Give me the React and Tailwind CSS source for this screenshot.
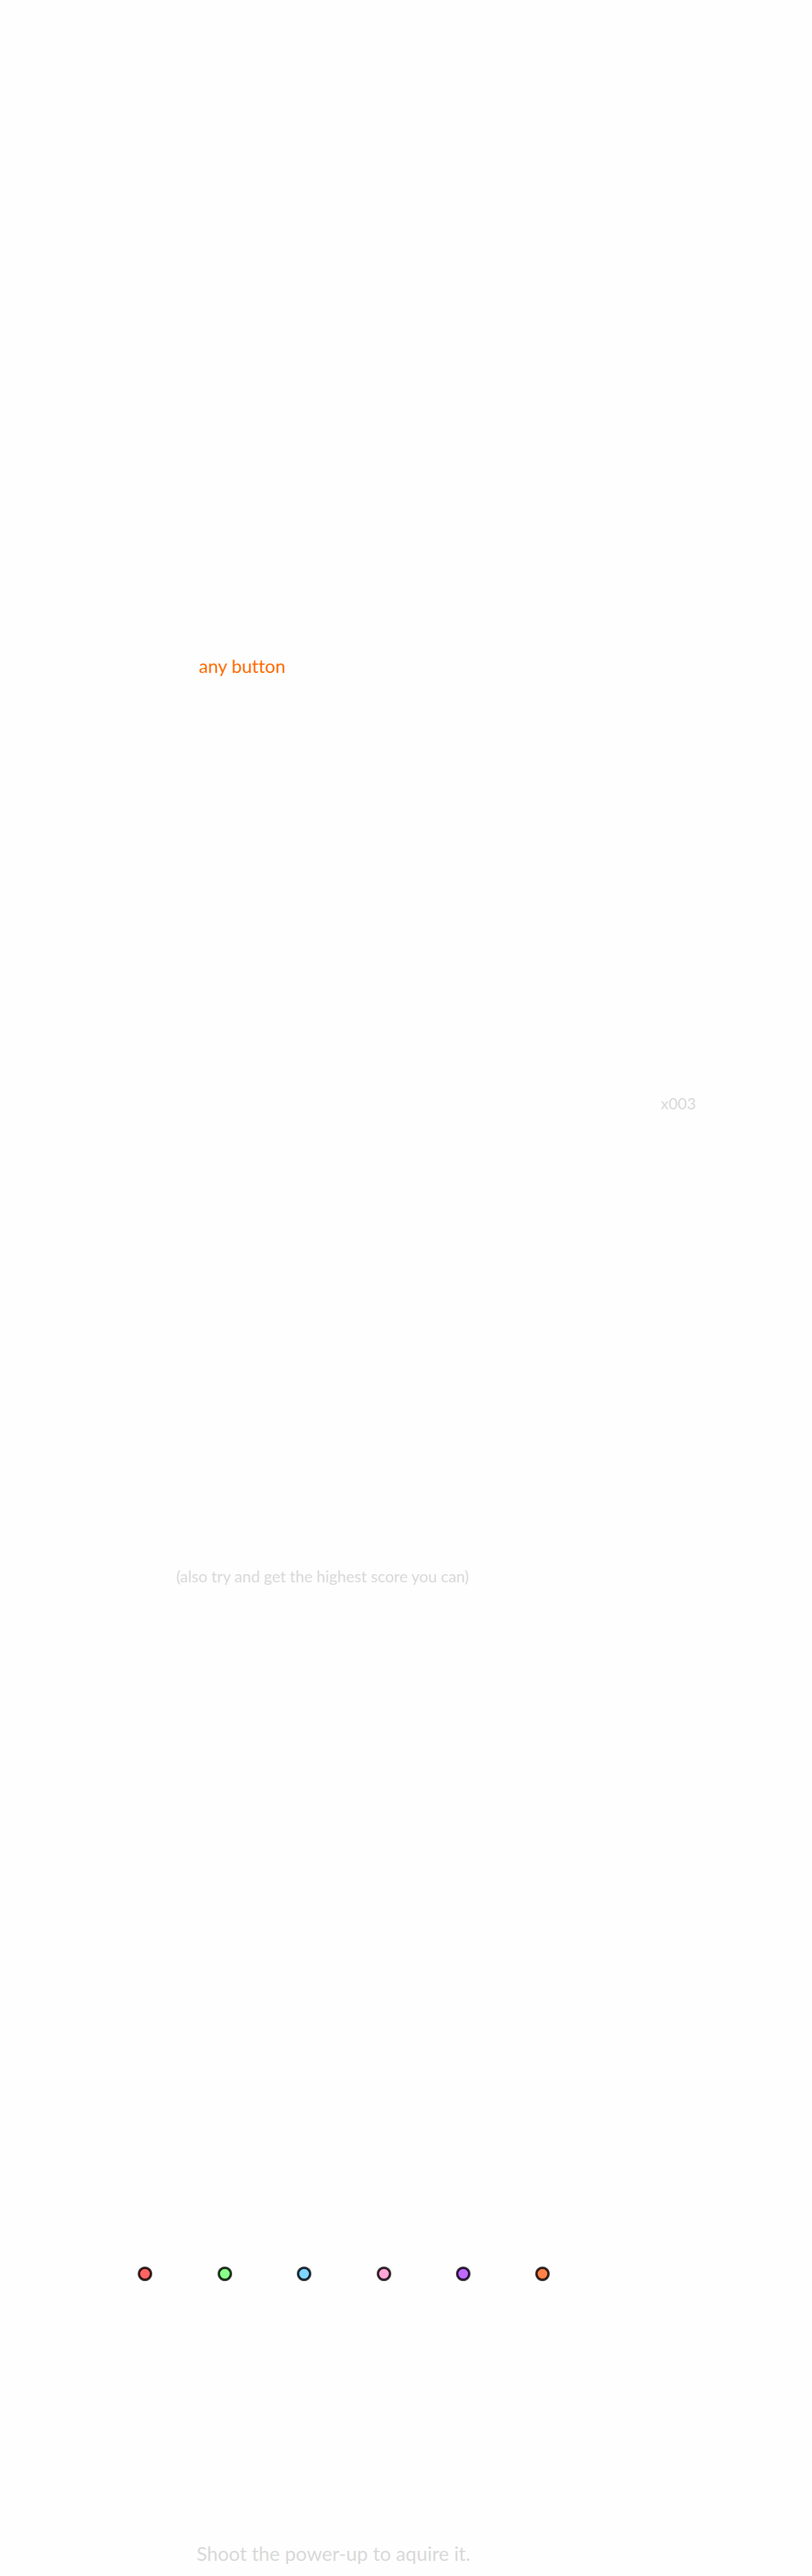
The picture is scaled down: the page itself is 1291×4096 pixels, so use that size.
const powerUps = [
  { name: "Red power-up", fill: "#ff6464", ring: "#2b0000" },
  { name: "Green power-up", fill: "#8aff8a", ring: "#002b00" },
  { name: "Blue power-up", fill: "#80d4ff", ring: "#001a2b" },
  { name: "Pink power-up", fill: "#ffa5d8", ring: "#2b0a1c" },
  { name: "Purple power-up", fill: "#c069ff", ring: "#1c0038" },
  { name: "Orange power-up", fill: "#ff8248", ring: "#2b0c00" },
];

function PowerUp({ name, fill, ring }) {
  return (
    <svg viewBox="0 0 36 36" className="size-[23px]" role="img" aria-label={name}>
      <circle cx="18" cy="18" r="18" fill="#333333" />
      <circle cx="18" cy="18" r="15" fill={ring} />
      <circle cx="18" cy="18" r="12.2" fill={fill} />
    </svg>
  );
}

export default function App() {
  return (
    <main className="flex min-h-screen flex-col bg-[#fefefe] pt-[1043px] pb-5 font-['Lato',sans-serif] leading-8 text-[#d8d8d8] [font-variant-ligatures:none]">
      <p className="pl-[24.5%] text-[29px] leading-8 text-[#ff6a00]">any button</p>
      <p className="mt-[663px] pr-[14.3%] text-right text-[25px] leading-8">x003</p>
      <p className="mt-[720px] pl-[21.7%] text-[25px] leading-8">
        (also try and get the highest score you can)
      </p>
      <ul className="mt-[1082px] ml-[17%] flex w-[655px] justify-between">
        {powerUps.map((powerUp) => (
          <li key={powerUp.name}>
            <PowerUp {...powerUp} />
          </li>
        ))}
      </ul>
      <p className="mt-[417px] pl-[24.2%] text-[31px] leading-8">
        Shoot the power-up to aquire it.
      </p>
    </main>
  );
}
